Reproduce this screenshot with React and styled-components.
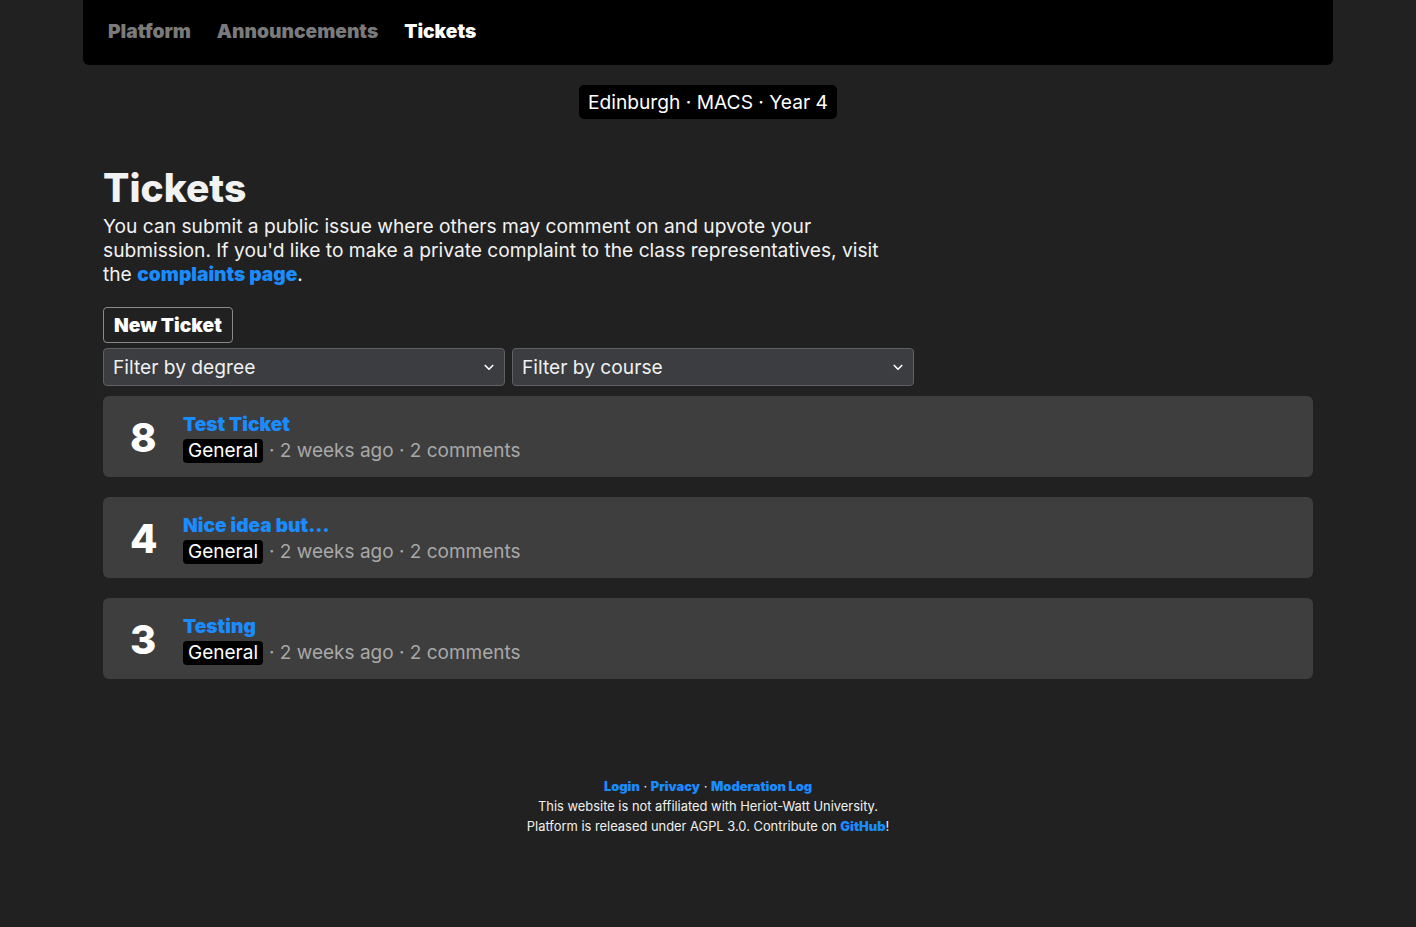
import styled, { createGlobalStyle } from 'styled-components';

const GlobalStyle = createGlobalStyle`
  html, body {
    margin: 0;
    padding: 0;
    background: #212121;
    color: #f2f2f2;
    font-family: Inter, "Noto Sans", sans-serif;
  }
  * {
    box-sizing: border-box;
  }
`;

const Page = styled.div`
  min-height: 927px;
  display: flex;
  flex-direction: column;
  align-items: center;
`;

const Nav = styled.nav`
  width: 1250px;
  height: 65px;
  background: #000;
  border-radius: 0 0 6px 6px;
  display: flex;
  align-items: center;
  gap: 26px;
  padding: 0 25px 4px;
`;

const NavLink = styled.a`
  font-size: 19.2px;
  font-weight: 900;
  color: ${(p) => (p.$active ? '#ffffff' : '#7a7a7a')};
  text-decoration: none;
`;

const Context = styled.div`
  margin-top: 20px;
  background: #000;
  color: #fff;
  font-size: 19.2px;
  padding: 5px 9px;
  border-radius: 5px;
  line-height: 24px;
`;

const Main = styled.main`
  width: 1250px;
  padding: 0 20px;
  margin-top: 46px;
`;

const Title = styled.h1`
  margin: 0;
  font-size: 39px;
  font-weight: 800;
  line-height: 46px;
  color: #f2f2f2;
`;

const Intro = styled.p`
  margin: 3px 0 20px;
  max-width: 800px;
  font-size: 19.2px;
  line-height: 24px;
  color: #f2f2f2;
`;

const Link = styled.a`
  color: #1a8cff;
  font-weight: 900;
  text-decoration: none;
`;

const Button = styled.button`
  font-family: inherit;
  font-size: 19.2px;
  font-weight: 900;
  color: #fff;
  background: transparent;
  border: 1px solid #8a8a8a;
  border-radius: 4px;
  height: 36px;
  padding: 0 10px;
  margin-top: 1px;
`;

const Filters = styled.div`
  display: flex;
  gap: 7px;
  width: 811px;
  margin-top: 5px;
`;

const Select = styled.div`
  flex: 1;
  height: 38px;
  background: #3b3d40;
  border: 1px solid #5f6165;
  border-radius: 4px;
  display: flex;
  align-items: center;
  justify-content: space-between;
  padding: 0 9px;
  font-size: 19.2px;
  color: #f0f0f0;
`;

const List = styled.div`
  display: flex;
  flex-direction: column;
  gap: 20px;
  margin-top: 10px;
`;

const Card = styled.div`
  height: 81px;
  background: #3e3e3e;
  border-radius: 6px;
  display: flex;
  align-items: center;
  padding: 2px 0 0 27px;
`;

const Votes = styled.div`
  width: 53px;
  font-size: 40px;
  font-weight: 800;
  color: #fff;
  line-height: 1;
`;

const Body = styled.div`
  display: flex;
  flex-direction: column;
  gap: 3px;
`;

const TicketTitle = styled.a`
  font-size: 19.2px;
  font-weight: 900;
  color: #1a8cff;
  text-decoration: none;
  line-height: 24px;
`;

const Meta = styled.div`
  display: flex;
  align-items: center;
  font-size: 19px;
  color: #a8a8a8;
  line-height: 24px;
`;

const Tag = styled.span`
  background: #000;
  color: #fff;
  padding: 0 5px;
  border-radius: 4px;
  margin-right: 6px;
`;

const Footer = styled.footer`
  margin-top: 98px;
  text-align: center;
  font-size: 12.9px;
  line-height: 20px;
  color: #f0f0f0;
`;

const FooterLink = styled.a`
  color: #1a8cff;
  font-weight: 900;
  text-decoration: none;
`;

const Chevron = () => (
  <svg width="12" height="12" viewBox="0 0 16 16" fill="none">
    <path d="M3 6l5 5 5-5" stroke="#fff" strokeWidth="2.2" strokeLinecap="round" strokeLinejoin="round" />
  </svg>
);

const tickets = [
  { votes: 8, title: 'Test Ticket' },
  { votes: 4, title: 'Nice idea but...' },
  { votes: 3, title: 'Testing' },
];

export default function App() {
  return (
    <>
      <GlobalStyle />
      <Page>
        <Nav>
          <NavLink>Platform</NavLink>
          <NavLink>Announcements</NavLink>
          <NavLink $active>Tickets</NavLink>
        </Nav>
        <Context>Edinburgh · MACS · Year 4</Context>
        <Main>
          <Title>Tickets</Title>
          <Intro>
            You can submit a public issue where others may comment on and upvote your
            submission. If you'd like to make a private complaint to the class
            representatives, visit the <Link>complaints page</Link>.
          </Intro>
          <Button>New Ticket</Button>
          <Filters>
            <Select>
              Filter by degree
              <Chevron />
            </Select>
            <Select>
              Filter by course
              <Chevron />
            </Select>
          </Filters>
          <List>
            {tickets.map((t) => (
              <Card key={t.title}>
                <Votes>{t.votes}</Votes>
                <Body>
                  <TicketTitle>{t.title}</TicketTitle>
                  <Meta>
                    <Tag>General</Tag>· 2 weeks ago · 2 comments
                  </Meta>
                </Body>
              </Card>
            ))}
          </List>
        </Main>
        <Footer>
          <div>
            <FooterLink>Login</FooterLink> · <FooterLink>Privacy</FooterLink> ·{' '}
            <FooterLink>Moderation Log</FooterLink>
          </div>
          <div>This website is not affiliated with Heriot-Watt University.</div>
          <div>
            Platform is released under AGPL 3.0. Contribute on <FooterLink>GitHub</FooterLink>!
          </div>
        </Footer>
      </Page>
    </>
  );
}
